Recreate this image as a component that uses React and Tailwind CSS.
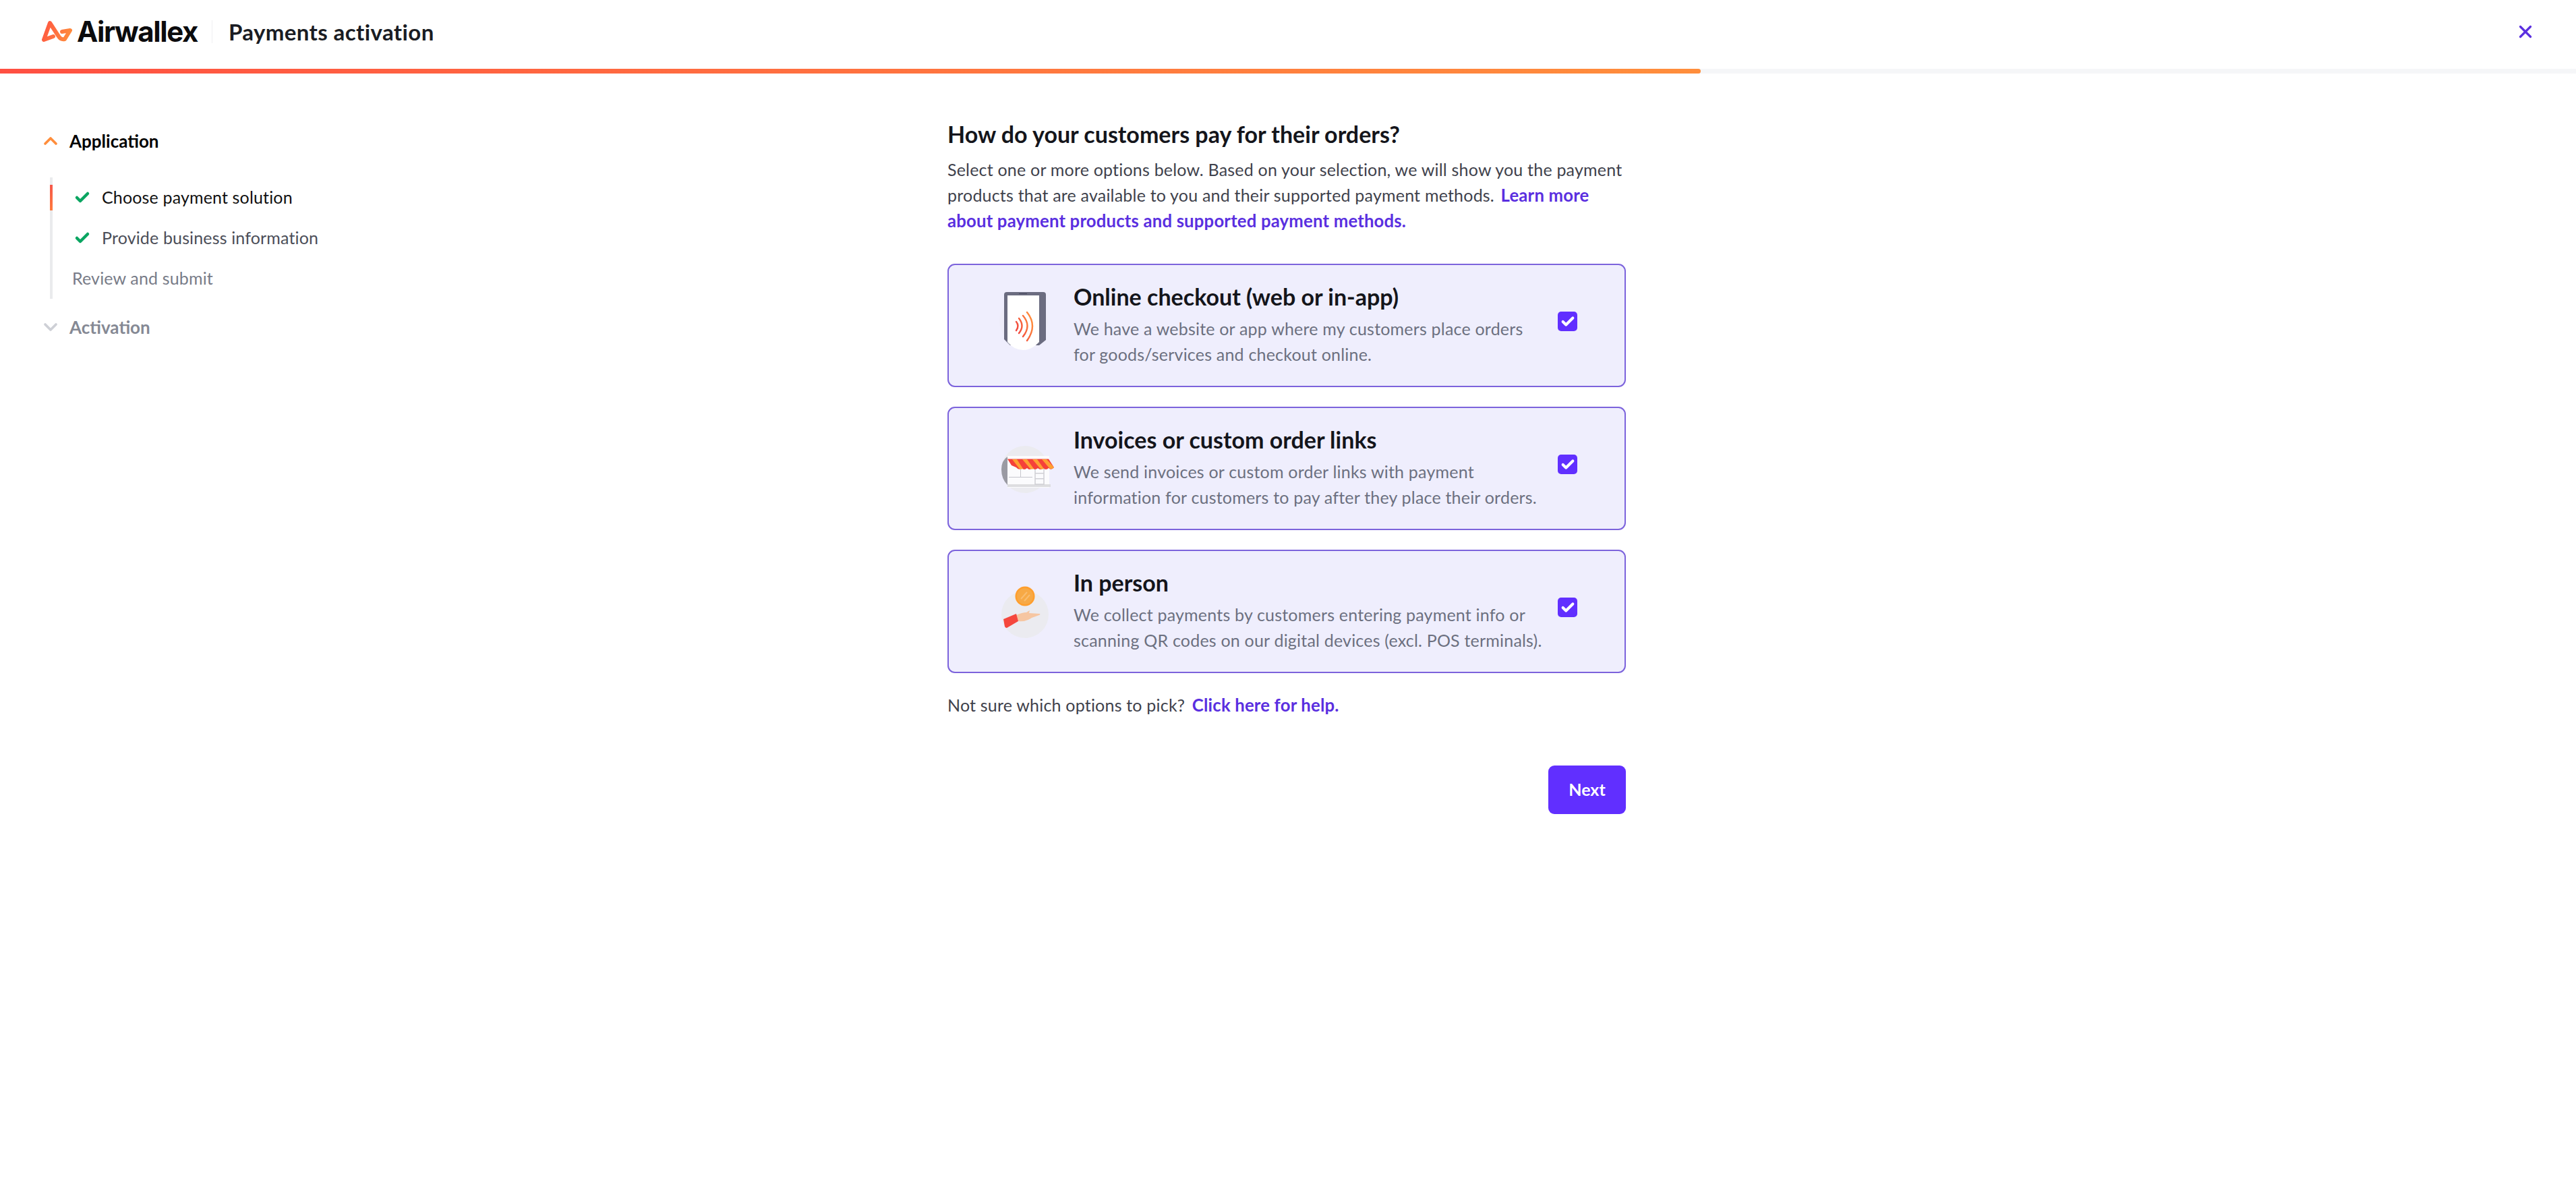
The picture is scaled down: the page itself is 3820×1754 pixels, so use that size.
import React from "react";
import { X, ChevronUp, ChevronDown, Check } from "lucide-react";

function Logo() {
  return (
    <svg width="48" height="33" viewBox="0 0 48 33" fill="none">
      <defs>
        <linearGradient id="logoGrad" x1="0" y1="0" x2="48" y2="20" gradientUnits="userSpaceOnUse">
          <stop stopColor="#ff4f42" />
          <stop offset="1" stopColor="#ff8e3c" />
        </linearGradient>
      </defs>
      <path
        d="M19 24 L5 29 L14 4 L27 24 Q30 29 36 28 L44 15 L32 17"
        stroke="url(#logoGrad)"
        strokeWidth="6"
        strokeLinejoin="round"
        strokeLinecap="round"
      />
    </svg>
  );
}

function PhoneIcon() {
  return (
    <svg width="100" height="100" viewBox="0 0 100 100" fill="none">
      <defs>
        <linearGradient id="waveGrad" x1="35" y1="60" x2="62" y2="50" gradientUnits="userSpaceOnUse">
          <stop stopColor="#f0443f" />
          <stop offset="1" stopColor="#ff8e3c" />
        </linearGradient>
      </defs>
      <circle cx="48" cy="50" r="36" fill="#eeedf9" />
      <path d="M19 11 Q19 7 23 7 H77 Q81 7 81 11 V78 L71 86 H28 L19 77 Z" fill="#6b6c80" />
      <path d="M24 12 H71 V81 Q60 93 47 93 Q34 93 24 81 Z" fill="#ffffff" />
      <rect x="41" y="9" width="12" height="1" fill="#44455a" />
      <path d="M37 51 Q42 57 37 64" stroke="url(#waveGrad)" strokeWidth="2.4" strokeLinecap="round" />
      <path d="M41 46 Q50 57 41 68" stroke="url(#waveGrad)" strokeWidth="2.4" strokeLinecap="round" />
      <path d="M47 42 Q60 57 47 73" stroke="url(#waveGrad)" strokeWidth="2.4" strokeLinecap="round" />
      <path d="M53 37 Q69 57 53 79" stroke="url(#waveGrad)" strokeWidth="2.4" strokeLinecap="round" />
    </svg>
  );
}

function StoreIcon() {
  return (
    <svg width="100" height="100" viewBox="0 0 100 100" fill="none">
      <circle cx="50" cy="58" r="35" fill="#ebebf0" />
      <path d="M24 39 Q15 45 15 58 Q15 72 24 81 Z" fill="#9a9aa3" />
      <rect x="24" y="38" width="62" height="47" fill="#fbfbfd" />
      <rect x="24" y="80" width="64" height="4" fill="#dddde0" />
      <rect x="26" y="69" width="35" height="1" fill="#c6c6cc" />
      <rect x="43" y="55" width="1" height="15" fill="#c6c6cc" />
      <rect x="65" y="56" width="13" height="24" fill="none" stroke="#cfcfd4" strokeWidth="1.5" />
      <rect x="65" y="63" width="13" height="1.5" fill="#cfcfd4" />
      <rect x="65" y="71" width="13" height="1.5" fill="#cfcfd4" />
      <path d="M24 42.5 H85 L93 55 Q89 60 85 56 Q81 60 77 56 Q73 60 69 56 Q65 60 61 56 Q57 60 53 56 Q49 60 45 56 Q41 60 37 55 L30 52 Z" fill="#f5413a" />
      <path d="M31 43 H38 L47 57 Q43 59 41 56 Z M46 43 H53 L63 57 Q59 59 57 56 Z M61 43 H68 L78 57 Q74 59 72 56 Z M75 43 H82 L93 55 Q89 59 86 56 Z" fill="#ffa033" />
    </svg>
  );
}

function CoinIcon() {
  return (
    <svg width="100" height="100" viewBox="0 0 100 100" fill="none">
      <circle cx="50" cy="61" r="35" fill="#ebebf0" />
      <circle cx="50" cy="34" r="14.5" fill="#ff9e2c" />
      <circle cx="50" cy="34" r="12" fill="#f7a945" />
      <path d="M44 38 L53 28 M49 41 L57 32" stroke="#f9bd70" strokeWidth="2" />
      <path d="M37 62 Q46 58 52 58 L57 55 L56 59 L72 60 Q73 61 71 62 L60 66 Q52 72 40 71 Z" fill="#f6c6a2" />
      <path d="M18 68 L37 60 L40 71 L23 81 Q21 81 20 79 Z" fill="#f5473d" />
    </svg>
  );
}

function OptionCard({ icon, title, lines }) {
  return (
    <div className="flex h-[183px] items-start rounded-[11px] border-2 border-[#7c63dc] bg-[#efeefd] pl-[63px] pt-[33px]">
      <div className="w-[100px] shrink-0">{icon}</div>
      <div className="-mt-[8px] ml-[22px] w-[718px] shrink-0">
        <div className="text-[34px] leading-[44px] font-bold text-[#14151b]">{title}</div>
        <div className="mt-[6px] text-[25px] leading-[38px] tracking-[0.2px] text-[#6c7080]">
          {lines[0]}
          <br />
          {lines[1]}
        </div>
      </div>
      <div className="mt-[36px] flex h-[29px] w-[29px] shrink-0 items-center justify-center rounded-[5px] bg-[#612fff]">
        <Check className="h-[22px] w-[22px] text-white" strokeWidth={4.5} />
      </div>
    </div>
  );
}

function SubStep({ label, tone, done }) {
  return (
    <div className={`flex h-[60px] items-center ${done ? "pl-[32px]" : "pl-[29px]"} ${tone} text-[25px] tracking-[0.15px]`}>
      {done && <Check className="mr-[17px] h-[24px] w-[24px] text-[#0aa561]" strokeWidth={4.5} />}
      <span>{label}</span>
    </div>
  );
}

export default function App() {
  return (
    <div className="min-h-[1754px] bg-white font-['Lato',sans-serif]">
      {/* header */}
      <header className="flex h-[102px] items-center pb-[9px] pl-[60px] pr-[60px]">
        <Logo />
        <span className="ml-[6px] font-['Inter',sans-serif] text-[42px] leading-none font-bold tracking-[-1.4px] text-[#0b0b0d]">
          Airwallex
        </span>
        <div className="ml-[21px] h-[34px] w-px bg-[#f0f0f2]" />
        <span className="ml-[24px] mt-[3px] text-[33px] font-bold tracking-[0.4px] text-[#1a1c23]">Payments activation</span>
        <button className="ml-auto text-[#5b2fe0]">
          <X className="h-[30px] w-[30px]" strokeWidth={2.6} />
        </button>
      </header>

      {/* progress */}
      <div className="h-[7px] bg-[#f5f6f8]">
        <div className="h-full w-[2522px] rounded-r-full bg-gradient-to-r from-[#ff4f42] to-[#ff8e3c]" />
      </div>

      <div className="flex">
        {/* sidebar */}
        <aside className="w-[1405px] shrink-0 pl-[59px] pt-[78px]">
          <div className="flex h-[44px] items-center text-[26px] font-bold text-black">
            <ChevronUp className="mr-[12px] h-[32px] w-[32px] text-[#ff8e3c]" strokeWidth={2.8} />
            Application
          </div>
          <div className="relative ml-[15px] mt-[32px] w-[500px] border-l-[4px] border-[#eaebed]">
            <div className="absolute -left-[4px] top-[11px] h-[38px] w-[4px] bg-gradient-to-b from-[#f5574a] to-[#ff7a3c]" />
            <SubStep label="Choose payment solution" tone="text-[#111]" done />
            <SubStep label="Provide business information" tone="text-[#4b4e58]" done />
            <SubStep label="Review and submit" tone="text-[#787c88]" />
          </div>
          <div className="mt-[20px] flex h-[44px] items-center text-[26px] font-bold text-[#858994]">
            <ChevronDown className="mr-[12px] h-[32px] w-[32px] text-[#ced0d6]" strokeWidth={2.8} />
            Activation
          </div>
        </aside>

        {/* main */}
        <main className="w-[1006px] shrink-0 pt-[68px]">
          <h1 className="text-[34px] leading-[44px] font-bold text-[#14151b]">
            How do your customers pay for their orders?
          </h1>
          <p className="mt-[11px] text-[25px] leading-[38px] tracking-[0.2px] text-[#3f424c]">
            Select one or more options below. Based on your selection, we will show you the payment
            <br />
            products that are available to you and their supported payment methods.{" "}
            <a className="ml-[3px] text-[25.7px] font-bold text-[#5a2fe0]">
              Learn more
              <br />
              about payment products and supported payment methods.
            </a>
          </p>

          <div className="mt-[45px] flex flex-col gap-[29px]">
            <OptionCard
              icon={<PhoneIcon />}
              title="Online checkout (web or in-app)"
              lines={[
                "We have a website or app where my customers place orders",
                "for goods/services and checkout online.",
              ]}
            />
            <OptionCard
              icon={<StoreIcon />}
              title="Invoices or custom order links"
              lines={[
                "We send invoices or custom order links with payment",
                "information for customers to pay after they place their orders.",
              ]}
            />
            <OptionCard
              icon={<CoinIcon />}
              title="In person"
              lines={[
                "We collect payments by customers entering payment info or",
                "scanning QR codes on our digital devices (excl. POS terminals).",
              ]}
            />
          </div>

          <p className="mt-[28px] text-[25px] leading-[38px] tracking-[0.2px] text-[#3f424c]">
            Not sure which options to pick?{" "}
            <a className="ml-[4px] text-[25.7px] font-bold text-[#5a2fe0]">Click here for help.</a>
          </p>

          <div className="mt-[71px] flex justify-end">
            <button className="h-[72px] w-[115px] rounded-[9px] bg-[#612fff] text-[25px] font-bold text-white">
              Next
            </button>
          </div>
        </main>
      </div>
    </div>
  );
}
